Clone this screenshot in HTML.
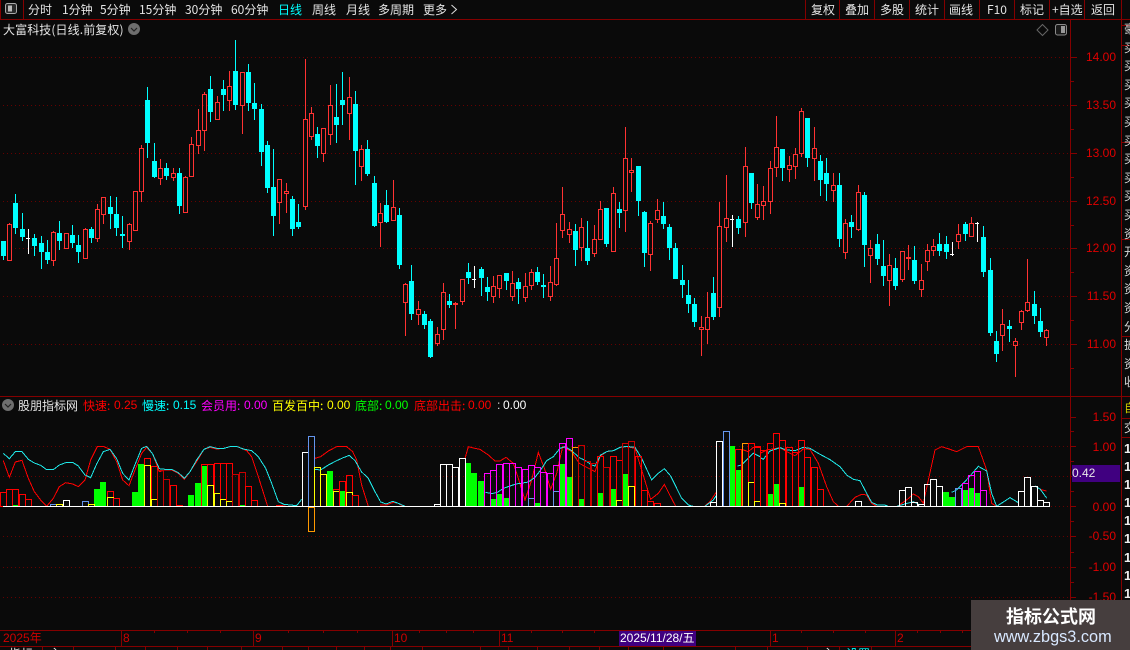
<!DOCTYPE html>
<html><head><meta charset="utf-8"><style>
html,body{margin:0;padding:0;background:#0a0a0a;width:1130px;height:650px;overflow:hidden}
#r{position:relative;width:1130px;height:650px;overflow:hidden;background:#0a0a0a;font-family:"WenQuanYi Zen Hei","Noto Sans CJK SC",sans-serif;font-size:12px}
#r span,#r div{position:absolute;white-space:nowrap}
.t span{top:3px;line-height:13px;color:#e4e4e4}
.h span{top:399px;line-height:13px}
.n{font-family:"Liberation Sans","WenQuanYi Zen Hei",sans-serif}
.a span{font-family:"Liberation Sans",sans-serif;color:#e00000;width:40px;text-align:right;line-height:14px}
.b span{font-family:"Liberation Sans","WenQuanYi Zen Hei",sans-serif;color:#d00000;top:631px;line-height:14px}
svg{position:absolute;left:0;top:0}
</style></head><body><div id="r">
<svg id="s" width="1130" height="650" viewBox="0 0 1130 650" shape-rendering="crispEdges">
<g stroke="#660000" stroke-width="1" stroke-dasharray="1 3">
<path d="M3 57.5H1068M3 105.5H1068M3 153.5H1068M3 201.5H1068M3 248.5H1068M3 296.5H1068M3 344.5H1068M3 446.5H1068M3 476.5H1068M3 506.5H1068M3 536.5H1068M3 567.5H1068M3 597.5H1068" fill="none"/>
</g>
<g stroke="#840000" fill="none" stroke-width="1">
<path d="M0 19.5H1130M0 396.5H1130M0 630.5H1130M0 646.5H1130M1070.5 19V630M1121.5 0V650M23.5 0V19M0.5 0V19M805.5 0V19M839.5 0V19M874.5 0V19M909.5 0V19M944.5 0V19M979.5 0V19M1014.5 0V19M1049.5 0V19M1084.5 0V19M1121 25.5H1130M1121 45.5H1130M1121 142.5H1130M1121 239.5H1130M1121 336.5H1130M1121 418.5H1130M1121 437.5H1130"/>
<path d="M1071 57.5h6M1071 105.5h6M1071 153.5h6M1071 201.5h6M1071 248.5h6M1071 296.5h6M1071 344.5h6M1071 81.5h3M1071 129.5h3M1071 177.5h3M1071 225.5h3M1071 272.5h3M1071 320.5h3M1071 368.5h3"/>
<path d="M1071 417.5h5M1071 446.5h5M1071 476.5h5M1071 506.5h5M1071 536.5h5M1071 567.5h5M1071 597.5h5M1071 431.5h3M1071 461.5h3M1071 491.5h3M1071 521.5h3M1071 552.5h3M1071 582.5h3"/>
<path d="M121.5 630V646M253.5 630V646M392.5 630V646M499.5 630V646M770.5 630V646M895.5 630V646M154.5 630v3M187.5 630v3M220.5 630v3M288.5 630v3M323.5 630v3M357.5 630v3M419.5 630v3M446.5 630v3M473.5 630v3M531.5 630v3M562.5 630v3M594.5 630v3M801.5 630v3M833.5 630v3M865.5 630v3M917.5 630v3M940.5 630v3M962.5 630v3"/>
<path d="M42.5 646V650M73.5 646V650M115.5 646V650M145.5 646V650M177.5 646V650M207.5 646V650M241.5 646V650M282.5 646V650M308.5 646V650M336.5 646V650M364.5 646V650M390.5 646V650M422.5 646V650M480.5 646V650M508.5 646V650M537.5 646V650M569.5 646V650M599.5 646V650M628.5 646V650M663.5 646V650M735.5 646V650M767.5 646V650M807.5 646V650M839.5 646V650M871.5 646V650"/>
</g>
<g id="lines" fill="none" stroke-width="1">
<g transform="translate(0 390) scale(.33333)" stroke="#f00">
<polyline vector-effect="non-scaling-stroke" points="10,212 28,262 46,216 66,211 85,265 103,305 122,330 140,349 160,325 178,290 197,278 218,282 235,290 255,270 272,210 292,170 312,170 330,178 350,215 368,270 387,287 405,240 425,190 440,172 458,192 478,245 495,240 515,240 535,250 553,268 570,245 590,215 612,178 630,172 650,177 672,175 690,170 712,170 740,182 755,200 775,260 797,330 803,349"/>
<polyline vector-effect="non-scaling-stroke" points="830,347 860,349"/>
<polyline vector-effect="non-scaling-stroke" points="945,205 962,200 985,183 1010,170 1040,170 1058,185 1070,210 1085,285 1105,349"/>
</g>
<g transform="translate(0 390) scale(.33333)" stroke="#1fe8e8">
<polyline vector-effect="non-scaling-stroke" points="10,190 28,206 46,185 66,185 85,208 103,219 122,226 140,239 160,239 178,225 197,218 218,217 235,228 255,255 272,263 290,222 310,185 330,178 350,206 368,250 387,270 405,224 425,175 440,169 458,192 478,236 495,238 515,238 535,248 553,265 570,245 590,210 612,178 630,170 650,175 672,175 690,170 712,170 730,177 755,182 775,200 797,235 815,280 835,335 852,343 890,347 905,328"/>
<polyline vector-effect="non-scaling-stroke" points="945,238 962,240 985,225 1010,212 1030,203 1048,196 1065,212 1085,246 1105,265 1125,305 1140,332"/>
</g>
<g transform="translate(380 390) scale(.33333)" stroke="#f00">
<polyline vector-effect="non-scaling-stroke" points="0,345 20,345 40,337 55,340 70,349"/>
<polyline vector-effect="non-scaling-stroke" points="255,205 265,170 285,175 300,178 325,195 345,213 360,213 378,202 400,220 415,265 435,330 455,270 475,187 495,240 512,298 530,250 548,170 575,185 598,220 620,232 645,245 660,200 680,185 700,182 720,172 740,170 765,175 785,240 812,328 835,310 853,283 872,320 887,349"/>
<polyline vector-effect="non-scaling-stroke" points="975,347 990,335 1010,305"/>
<polyline vector-effect="non-scaling-stroke" points="1070,178 1085,178 1105,185 1120,172 1140,172"/>
</g>
<g transform="translate(380 390) scale(.33333)" stroke="#1fe8e8">
<polyline vector-effect="non-scaling-stroke" points="0,335 18,342 38,334 55,340 75,349"/>
<polyline vector-effect="non-scaling-stroke" points="317,307 335,311 352,307 370,295 390,288 408,282 428,279 445,276 465,262 482,240 500,212 520,200 540,175 555,170 575,182 598,203 615,211 635,225 645,228 662,195 682,184 700,182 720,172 740,169 765,172 785,205 815,270 835,250 853,236 872,258 905,325 925,345 940,349 975,349 1000,330 1010,315"/>
<polyline vector-effect="non-scaling-stroke" points="1072,228 1085,225 1110,200 1120,190 1140,200"/>
</g>
<g transform="translate(760 390) scale(.33333)" stroke="#f00">
<polyline vector-effect="non-scaling-stroke" points="0,190 20,180 60,173 80,185 105,197 130,177 150,178 175,220 200,290 220,335 235,349 260,349 285,322 305,313 320,315 335,340 350,349"/>
<polyline vector-effect="non-scaling-stroke" points="412,349 440,330 460,312 475,320 490,340 505,270 525,180 545,170 570,178 590,185 620,170 655,170 680,240 695,340 710,349"/>
<polyline vector-effect="non-scaling-stroke" points="840,298 860,303"/>
</g>
<g transform="translate(760 390) scale(.33333)" stroke="#1fe8e8">
<polyline vector-effect="non-scaling-stroke" points="0,203 10,208 30,183 60,173 80,180 105,182 130,172 150,175 175,190 210,209 240,230 260,255 280,268 300,272 320,310 335,337 352,345 383,346"/>
<polyline vector-effect="non-scaling-stroke" points="410,349 460,335 470,340 480,345"/>
<polyline vector-effect="non-scaling-stroke" points="575,307 590,300 610,280 630,258 655,229 680,243 695,310 710,349 750,323 775,338"/>
<polyline vector-effect="non-scaling-stroke" points="825,288 840,297 860,324"/>
</g>
</g>
<g id="bars"></g>
<rect x="3" y="506" width="1047" height="1" fill="#fff"/>
<g id="candles"></g>
<g shape-rendering="geometricPrecision">
<rect x="5.5" y="3.5" width="11" height="10" rx="2" fill="#2a2a2a" stroke="#aaa"/><rect x="8" y="5.5" width="4" height="6" fill="#bbb"/>
<rect x="1055.5" y="24.5" width="11" height="10.5" rx="2" fill="#1a1a1a" stroke="#8a8a8a"/><rect x="1061" y="26" width="4" height="7" fill="#999"/>
<path d="M1042.5 24.5L1048 30L1042.5 35.5L1037 30Z" fill="none" stroke="#666"/>
<circle cx="134" cy="29" r="6" fill="#6e6e6e"/><path d="M131 28l3 3 3-3" fill="none" stroke="#222" stroke-width="1.2"/>
<circle cx="8" cy="405" r="6" fill="#6e6e6e"/><path d="M5 404l3 3 3-3" fill="none" stroke="#222" stroke-width="1.2"/>
<path d="M451.5 5l5 4.5-5 4.5" fill="none" stroke="#ddd"/>
</g>
</svg>
<div class="t">
<span style="left:28px">分时</span><span style="left:62px">1分钟</span><span style="left:100px">5分钟</span><span style="left:139px">15分钟</span><span style="left:185px">30分钟</span><span style="left:231px">60分钟</span><span style="left:278px;color:#0ff">日线</span><span style="left:312px">周线</span><span style="left:346px">月线</span><span style="left:378px">多周期</span><span style="left:423px">更多</span>
<span style="left:811px">复权</span><span style="left:845px">叠加</span><span style="left:880px">多股</span><span style="left:915px">统计</span><span style="left:949px">画线</span><span style="left:987px">F10</span><span style="left:1020px">标记</span><span style="left:1052px">+自选</span><span style="left:1091px">返回</span>
</div>
<span style="left:3px;top:23px;line-height:13px;color:#e4e4e4;letter-spacing:.1px">大富科技(日线.前复权)</span>
<div class="h">
<span style="left:18px;color:#e4e4e4">股朋指标网</span>
<span style="left:83px;color:#f00">快速:</span><span class="n" style="left:114px;color:#f00">0.25</span>
<span style="left:142px;color:#0ff">慢速:</span><span class="n" style="left:173px;color:#0ff">0.15</span>
<span style="left:201px;color:#f0f">会员用:</span><span class="n" style="left:244px;color:#f0f">0.00</span>
<span style="left:272px;color:#ff0">百发百中:</span><span class="n" style="left:327px;color:#ff0">0.00</span>
<span style="left:355px;color:#0f0">底部:</span><span class="n" style="left:385px;color:#0f0">0.00</span>
<span style="left:414px;color:#f00">底部出击:</span><span class="n" style="left:468px;color:#f00">0.00</span>
<span class="n" style="left:497px;color:#ddd">:</span><span class="n" style="left:503px;color:#fff">0.00</span>
</div>
<div class="a">
<span style="left:1076px;top:50px">14.00</span><span style="left:1076px;top:98px">13.50</span><span style="left:1076px;top:146px">13.00</span><span style="left:1076px;top:194px">12.50</span><span style="left:1076px;top:241px">12.00</span><span style="left:1076px;top:289px">11.50</span><span style="left:1076px;top:337px">11.00</span>
<span style="left:1076px;top:410px">1.50</span><span style="left:1076px;top:440px">1.00</span><span style="left:1076px;top:500px">0.00</span><span style="left:1076px;top:529px">-0.50</span><span style="left:1076px;top:560px">-1.00</span><span style="left:1076px;top:590px">-1.50</span>
<span style="left:1076px;top:470px">0.50</span>
</div>
<div style="left:1072px;top:465px;width:48px;height:17px;background:#400080"></div>
<span class="n" style="left:1072px;top:466px;line-height:14px;color:#e8e8e8">0.42</span>
<div class="b">
<span style="left:3px">2025年</span><span style="left:123px">8</span><span style="left:255px">9</span><span style="left:394px">10</span><span style="left:501px">11</span><span style="left:772px">1</span><span style="left:897px">2</span>
</div>
<div style="left:619px;top:631px;width:77px;height:15px;background:#400080"></div>
<span class="n" style="left:620px;top:631px;line-height:14px;color:#fff">2025/11/28/五</span>
<div style="left:1124px;top:20px;width:6px;height:376px;overflow:hidden;color:#d8d8d8;line-height:18.6px;white-space:normal;font-size:12px">豪<br>买<br>买<br>买<br>买<br>买<br>买<br>买<br>买<br>买<br>买<br>资<br>开<br>资<br>资<br>资<br>分<br>披<br>资<br>收</div>
<div style="left:1124px;top:401px;width:6px;height:14px;overflow:hidden;color:#c8c800;line-height:13px">自</div>
<div style="left:1124px;top:421px;width:6px;height:14px;overflow:hidden;color:#ddd;line-height:13px">交</div>
<div style="left:1124px;top:440px;width:6px;height:160px;overflow:hidden;color:#eee;font:bold 13px/18.1px 'Liberation Sans',sans-serif;white-space:normal">1<br>1<br>1<br>1<br>1<br>1<br>1<br>1<br>1</div>
<span style="left:9px;top:647px;color:#eee;line-height:13px">指标</span><span style="left:49px;top:647px;color:#eee;line-height:13px">主</span><span style="left:822px;top:647px;color:#eee;line-height:13px">主</span><span style="left:846px;top:647px;color:#0ff;line-height:13px">设置</span>
<div style="left:971px;top:600px;width:159px;height:50px;background:#463e3e"></div>
<span style="left:1006px;top:606px;width:92px;font-weight:bold;font-size:18px;line-height:20px;color:#fff;font-family:'Noto Sans CJK SC',sans-serif">指标公式网</span>
<span style="left:994px;top:628px;font-size:16.3px;line-height:18px;color:#d8e8ff;font-family:'Liberation Sans',sans-serif">www.zbgs3.com</span>
</div>
<script>
var C="c241 241 256 260,r223 224 261 261,c194 203 228 234,c213 229 237 241,w229 238 238 254,c234 238 246 256,c236 243 252 269,c240 252 260 264,r231 232 261 266,c221 233 241 250,r233 233 249 249,c225 235 243 248,c235 245 252 263,r228 229 259 259,c227 229 238 243,r204 209 239 242,r197 197 215 224,c196 207 214 229,c197 214 228 236,c216 234 236 248,r223 224 242 250,r191 191 231 231,r145 148 192 202,c87 100 143 158,c143 161 177 178,r159 168 179 185,c163 168 176 180,r168 173 178 181,c168 173 206 214,r176 177 213 213,r137 144 177 177,r109 130 146 154,r92 94 131 151,c76 89 112 122,r96 102 120 120,c80 89 95 111,r71 86 101 111,c40 71 105 110,r72 72 106 134,c64 72 103 111,c83 103 109 120,c104 109 152 166,c141 145 188 193,c149 187 216 236,r179 179 203 224,r183 191 194 213,c196 199 229 236,c204 222 227 229,r59 119 207 210,r107 113 137 140,c127 134 146 158,r128 128 154 162,r85 105 135 145,c84 117 125 143,c72 100 105 125,r77 97 114 140,c91 104 151 185,r145 149 167 181,c140 149 174 176,c176 183 226 227,r203 213 223 247,c190 205 222 223,r180 207 221 221,c208 215 265 269,r283 284 303 336,c265 281 314 320,r301 309 315 325,c311 314 325 329,c319 321 357 358,r327 334 344 346,r283 292 330 340,c294 301 305 308,r302 303 305 329,r279 279 302 305,c263 272 278 284,w266 279 279 288,c267 269 278 296,c277 287 292 301,r276 286 297 303,r275 275 289 298,c273 273 281 290,r271 283 297 301,c278 282 289 304,r273 286 298 302,r269 272 286 290,c267 272 282 285,c274 285 287 298,r266 282 297 301,r223 258 285 286,r187 214 231 238,r222 229 235 243,c224 231 250 266,r218 227 248 261,c221 248 261 265,r225 239 254 257,r201 209 240 240,c208 208 244 247,r187 193 252 252,c202 209 213 228,r127 158 211 232,r158 170 173 192,c166 166 201 216,c211 212 253 267,r221 223 255 271,r199 210 220 223,c202 216 224 229,c224 227 248 260,c243 248 279 279,c265 280 285 298,c280 295 304 313,c298 304 322 327,r316 327 330 356,r292 317 330 344,c277 293 317 320,r202 226 308 317,r175 218 228 242,w215 219 219 247,c216 219 228 234,r147 166 223 237,c173 173 203 209,r184 204 218 220,r186 201 206 220,r161 168 202 214,r116 147 168 177,c149 149 168 181,r156 165 170 182,r148 154 167 179,r108 111 154 157,c118 118 158 167,r127 148 159 181,c155 161 180 196,c158 173 184 201,r173 185 191 202,c173 185 239 247,r219 223 253 259,c215 222 227 238,r185 192 230 231,c192 195 245 267,r240 248 256 283,c234 244 259 265,c240 266 276 286,r254 265 281 306,c258 268 286 290,r251 251 280 282,r245 257 259 270,c246 260 281 284,r264 280 290 297,r244 250 262 271,r239 246 251 256,c233 244 251 256,c236 244 252 259,w242 254 254 256,r224 234 242 249,c222 224 234 241,r217 223 237 237,w222 223 223 242,c226 237 272 277,c258 270 333 336,c331 341 354 362,r309 324 336 351,c320 326 329 342,r338 341 346 377,r310 311 323 330,r259 302 311 312,c291 304 316 324,c308 321 332 337,r329 330 338 346".split(",");
var B="0 R492,1 R489,2 R489 G505,3 R494,4 R499,8 B504,9 Y504,10 W500,13 B501,14 Y504,15 G489,16 G482,17 R491 Y497,18 R498,21 G492,22 G464,23 R458 Y465,24 R466 Y499,25 D470,26 D479,27 R485,28 R505,30 G495,31 G483,32 R464 G466,33 R464 Y485,34 R463 Y493,35 R463 Y499,36 R463 Y501,37 D474,38 D472 G505,39 R486,40 R500,44 R505,48 W452,49 B436,50 Y467,51 Y474,52 G471,53 R489 Y491,54 R481 G491,55 R475 Y492,56 R495,69 W504,70 W464,71 W464,72 W467,73 W458,74 G463,75 G473,76 G481,77 M473,78 M470 G499,79 M464 G494,80 M463 G498,81 M463,82 M467,83 M469,84 M465 B498,85 M467 G503,86 M472,87 M473,88 M465 B491,89 M443 G464,90 M438 G477,91 O447,92 D445 G499,93 D461,94 D463,95 R456 G493,96 D467,97 R456 G489,98 R460 Y500,99 D443 G474,100 D441 Y486,101 R456,102 R490,103 R501,104 R503,113 W502,114 W441,115 B431,116 G446,117 R449 G470,118 O443,119 R443 Y482,120 R446 Y501,121 R450,122 R443 G494,123 R433 G484,124 R440 Y503,125 R447,126 R452,127 R440 G487,128 R457,129 R467,130 R489,136 W501,143 W490,144 W487,145 W502,146 W504,147 W484,148 W479,149 W486,150 G492,151 G497,152 B488,153 M483 G490,154 M475 G488,155 M471 G493,156 M490,162 W491,163 W477,164 W486,165 W500,166 W502".split(",");
var K={R:"#f00",D:"#c80000",W:"#fff",Y:"#ff0",M:"#f0f",B:"#6495ed",O:"#ff9900",G:"#0f0"};
function px(i){return Math.floor(3.33+6.286*i)}
var h="";
C.forEach(function(s,i){var t=s[0],a=s.slice(1).split(" ").map(Number),H=a[0],T=a[1],Bt=a[2],L=a[3],x=px(i);
if(t=="c"){h+='<rect x="'+x+'" y="'+H+'" width="1" height="'+(L-H)+'" fill="#0ff"/><rect x="'+(x-2)+'" y="'+T+'" width="5" height="'+Math.max(Bt-T,1)+'" fill="#0ff"/>';}
else if(t=="w"){h+='<rect x="'+x+'" y="'+H+'" width="1" height="'+(L-H)+'" fill="#fff"/><rect x="'+(x-2)+'" y="'+T+'" width="4" height="1" fill="#fff"/>';}
else{var c="#ff3232";
if(T>H)h+='<rect x="'+x+'" y="'+H+'" width="1" height="'+(T-H)+'" fill="'+c+'"/>';
if(L>Bt)h+='<rect x="'+x+'" y="'+Bt+'" width="1" height="'+(L-Bt)+'" fill="'+c+'"/>';
h+='<rect x="'+(x-1.5)+'" y="'+(T+.5)+'" width="4" height="'+Math.max(Bt-T-1,1)+'" fill="none" stroke="'+c+'"/>';}
});
document.getElementById("candles").innerHTML=h;
var g="",o="";
B.forEach(function(s){var p=s.split(" "),i=+p[0],x=px(i)-3;
p.slice(1).forEach(function(q){var k=q[0],y=+q.slice(1);
if(k=="G")g+='<rect x="'+x+'" y="'+y+'" width="6" height="'+(506-y)+'" fill="#0f0"/>';
else o+='<rect x="'+(x+.5)+'" y="'+(y+.5)+'" width="6" height="'+(506-y)+'" fill="none" stroke="'+K[k]+'"/>';});
});
o+='<rect x="'+(px(49)-2.5)+'" y="507.5" width="6" height="24" fill="none" stroke="#ff9900"/>';
document.getElementById("bars").innerHTML=g+o;
</script>
</body></html>
